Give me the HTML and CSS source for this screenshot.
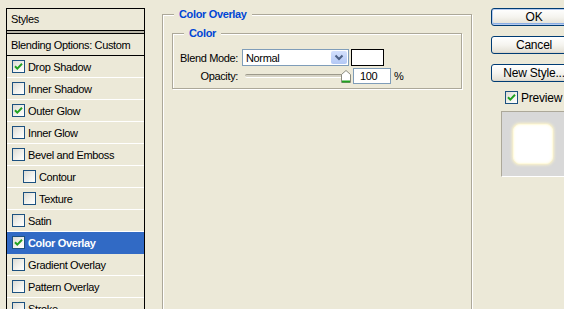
FILE: index.html
```html
<!DOCTYPE html>
<html>
<head>
<meta charset="utf-8">
<title>Layer Style</title>
<link rel="stylesheet" href="styles.css">
</head>
<body>
<div class="dialog">
  <div class="side">
    <div class="styles-head">Styles</div>
    <div class="side-sep"></div>
    <div class="list">
      <div class="item head">Blending Options: Custom</div>
      <div class="item"><span class="cb on"><svg viewBox="0 0 11 11"><path d="M2 5.2 L4.3 7.6 L9 2.8" /></svg></span>Drop Shadow</div>
      <div class="item"><span class="cb"></span>Inner Shadow</div>
      <div class="item"><span class="cb on"><svg viewBox="0 0 11 11"><path d="M2 5.2 L4.3 7.6 L9 2.8" /></svg></span>Outer Glow</div>
      <div class="item"><span class="cb"></span>Inner Glow</div>
      <div class="item"><span class="cb"></span>Bevel and Emboss</div>
      <div class="item sub"><span class="cb"></span>Contour</div>
      <div class="item sub"><span class="cb"></span>Texture</div>
      <div class="item"><span class="cb"></span>Satin</div>
      <div class="item sel"><span class="cb on"><svg viewBox="0 0 11 11"><path d="M2 5.2 L4.3 7.6 L9 2.8" /></svg></span>Color Overlay</div>
      <div class="item"><span class="cb"></span>Gradient Overlay</div>
      <div class="item"><span class="cb"></span>Pattern Overlay</div>
      <div class="item"><span class="cb"></span>Stroke</div>
    </div>
  </div>

  <div class="group outer">
    <div class="legend">Color Overlay</div>
    <div class="group inner">
      <div class="legend">Color</div>
      <div class="row blend">
        <span class="label">Blend Mode:</span>
        <div class="select">
          <span class="sel-text">Normal</span>
          <span class="drop"><svg viewBox="0 0 15 13"><path d="M4 4.5 L7.5 8 L11 4.5" /></svg></span>
        </div>
        <div class="swatch"></div>
      </div>
      <div class="row opacity">
        <span class="label">Opacity:</span>
        <div class="slider">
          <div class="track"></div>
          <svg class="thumb" viewBox="0 0 10 13"><path d="M0.5 12.5 V4.5 L5 0.5 L9.5 4.5 V12.5 Z" fill="#fff" stroke="#8a8a7e"/><path d="M1 11.5 H9" stroke="#21a121" stroke-width="2"/></svg>
        </div>
        <div class="num">100</div>
        <span class="pct">%</span>
      </div>
    </div>
  </div>

  <div class="actions">
    <div class="btn default">OK</div>
    <div class="btn">Cancel</div>
    <div class="btn">New Style...</div>
    <div class="preview-check"><span class="cb on"><svg viewBox="0 0 11 11"><path d="M2 5.2 L4.3 7.6 L9 2.8" /></svg></span>Preview</div>
    <div class="preview-box"><div class="swatch-prev"></div></div>
  </div>
</div>
</body>
</html>
```

FILE: styles.css
```css
html, body {
  margin: 0;
  padding: 0;
}
body {
  background: #ece9d8;
  font-family: "Liberation Sans", Arial, sans-serif;
  font-size: 11px;
  letter-spacing: -0.35px;
  color: #000;
  overflow: hidden;
  width: 564px;
  height: 309px;
}
.dialog {
  display: flex;
  align-items: flex-start;
}

/* Left list */
.side {
  margin: 8px 0 0 6px;
  width: 139px;
  flex: none;
}
.styles-head {
  border: 1px solid #000;
  height: 21px;
  line-height: 21px;
  padding-left: 4px;
}
.side-sep {
  height: 2px;
  background: #b9b6a8;
  border-left: 1px solid #000;
  border-right: 1px solid #000;
}
.list {
  border: 1px solid #000;
  border-bottom: none;
  height: 400px;
}
.item {
  height: 21px;
  border-bottom: 1px solid #fff;
  display: flex;
  align-items: center;
  padding-left: 5px;
  white-space: nowrap;
}
.item.head {
  border-bottom: 1px solid #000;
  padding-left: 4px;
}
.item.sub {
  padding-left: 16px;
}
.item.sel {
  background: #316ac5;
  color: #fff;
  font-weight: bold;
  border-bottom-color: #316ac5;
}
.cb {
  width: 11px;
  height: 11px;
  border: 1px solid #1c5180;
  background: linear-gradient(135deg, #dcdbd4 0%, #f4f4f0 60%, #fff 100%);
  margin-right: 3px;
  flex: none;
  display: flex;
}
.cb svg {
  width: 11px;
  height: 11px;
}
.cb svg path {
  fill: none;
  stroke: #21a121;
  stroke-width: 2;
}

/* Group boxes */
.group {
  border: 1px solid #aca899;
  box-shadow: inset 1px 1px 0 #fff, 1px 1px 0 #fff;
}
.outer {
  margin: 14px 0 0 17px;
  width: 308px;
  height: 320px;
  flex: none;
}
.legend {
  display: inline-block;
  background: #ece9d8;
  color: #0046d5;
  font-weight: bold;
  line-height: 13px;
  height: 13px;
  margin-top: -7px;
  padding: 0 5px;
  vertical-align: top;
}
.outer > .legend {
  margin-left: 11px;
}
.inner {
  margin: 6px 0 0 9px;
  width: 288px;
  padding-bottom: 4px;
}
.inner > .legend {
  margin-left: 11px;
}
.row {
  display: flex;
  align-items: center;
}
.label {
  width: 65px;
  text-align: right;
  flex: none;
}
.blend {
  margin-top: 3px;
  height: 17px;
}
.select {
  margin-left: 4px;
  width: 105px;
  height: 15px;
  border: 1px solid #7f9db9;
  background: #fff;
  display: flex;
  align-items: center;
  justify-content: space-between;
}
.sel-text {
  padding-left: 3px;
}
.drop {
  width: 16px;
  height: 13px;
  margin-right: 1px;
  border-radius: 2px;
  background: linear-gradient(#d3e0fd, #b3c8f5);
  display: flex;
}
.drop svg {
  width: 16px;
  height: 13px;
}
.drop svg path {
  fill: none;
  stroke: #4d6185;
  stroke-width: 2;
}
.swatch {
  margin-left: 2px;
  width: 31px;
  height: 15px;
  border: 1px solid #000;
  background: #fff;
}
.opacity {
  margin-top: 2px;
  height: 16px;
}
.slider {
  margin-left: 4px;
  width: 109px;
  height: 16px;
  display: flex;
  align-items: center;
  position: relative;
}
.track {
  margin-left: 3px;
  width: 101px;
  height: 2px;
  border-top: 1px solid #9d9a8c;
  border-bottom: 1px solid #fff;
  background: #d7d4c6;
  border-radius: 2px;
}
.thumb {
  position: absolute;
  left: 99px;
  top: 2px;
  width: 10px;
  height: 13px;
}
.num {
  margin-left: 2px;
  width: 30px;
  height: 14px;
  line-height: 14px;
  border: 1px solid #7f9db9;
  background: #fff;
  padding-left: 6px;
}
.pct {
  margin-left: 3px;
}

/* Right actions */
.actions {
  margin: 8px 0 0 19px;
  width: 86px;
  flex: none;
}
.btn {
  width: 84px;
  height: 16px;
  line-height: 16px;
  border: 1px solid #003c74;
  border-radius: 3px;
  background: linear-gradient(#fff 0%, #f5f4ef 50%, #e6e3d8 90%, #d6d0c5 100%);
  text-align: center;
  margin-bottom: 10px;
  white-space: nowrap;
  font-size: 12px;
  letter-spacing: -0.2px;
}
.btn.default {
  box-shadow: inset 0 0 0 1px #b6cbef, inset 0 -1px 0 1px #89ade4;
}
.preview-check {
  display: flex;
  align-items: center;
  height: 13px;
  margin: -1px 0 0 14px;
  font-size: 12px;
  letter-spacing: -0.2px;
  white-space: nowrap;
}
.preview-check .cb {
  margin-right: 3px;
}
.preview-box {
  margin: 7px 0 0 10px;
  width: 80px;
  height: 64px;
  border-top: 1px solid #aca899;
  border-left: 1px solid #aca899;
  border-bottom: 1px solid #fff;
  background: #d8d8d8;
  padding: 12px 0 0 11px;
  box-sizing: border-box;
  height: 66px;
}
.swatch-prev {
  width: 38px;
  height: 38px;
  border-radius: 7px;
  background: #fff;
  border: 1px solid #fffbe0;
  box-shadow: 0 0 3px 1px #fff6c9, inset 0 0 3px #fffbe6;
}
```
